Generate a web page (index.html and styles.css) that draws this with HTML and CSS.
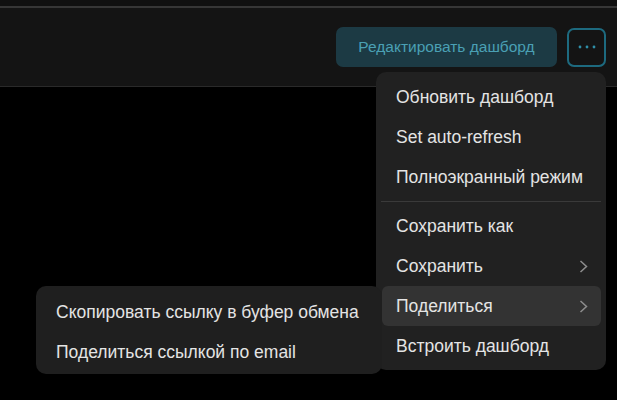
FILE: index.html
```html
<!DOCTYPE html>
<html lang="ru">
<head>
<meta charset="utf-8">
<link rel="stylesheet" href="styles.css">
</head>
<body>
<div class="topstrip"></div>
<header class="header">
  <button class="edit-btn">Редактировать дашборд</button>
  <button class="more-btn" aria-label="Ещё">
    <svg width="20" height="4" viewBox="0 0 20 4"><circle cx="3" cy="2" r="1.4"/><circle cx="10" cy="2" r="1.4"/><circle cx="17" cy="2" r="1.4"/></svg>
  </button>
</header>
<div class="canvas"></div>

<div class="menu main-menu">
  <div class="item">Обновить дашборд</div>
  <div class="item">Set auto-refresh</div>
  <div class="item">Полноэкранный режим</div>
  <div class="sep"></div>
  <div class="item">Сохранить как</div>
  <div class="item">Сохранить <svg class="chev" width="9" height="13" viewBox="0 0 9 13"><path d="M1.5 1 L7.5 6.5 L1.5 12"/></svg></div>
  <div class="item active">Поделиться <svg class="chev" width="9" height="13" viewBox="0 0 9 13"><path d="M1.5 1 L7.5 6.5 L1.5 12"/></svg></div>
  <div class="item">Встроить дашборд</div>
</div>

<div class="menu sub-menu">
  <div class="item">Скопировать ссылку в буфер обмена</div>
  <div class="item">Поделиться ссылкой по email</div>
</div>
</body>
</html>
```
FILE: styles.css
```css
html, body {
  margin: 0;
  padding: 0;
  background: #000;
  font-family: "Liberation Sans", Arial, sans-serif;
  width: 617px;
  height: 400px;
  overflow: hidden;
  position: relative;
}
.topstrip {
  height: 6px;
  background: #101010;
  border-bottom: 2px solid #363636;
}
.header {
  height: 78px;
  background: #141414;
  border-bottom: 1px solid #2a2a2a;
  display: flex;
  justify-content: flex-end;
  align-items: center;
  gap: 10px;
  padding-right: 11px;
  box-sizing: content-box;
}
.edit-btn {
  height: 40px;
  width: 221px;
  border: none;
  border-radius: 7px;
  background: #1c3a44;
  color: #4aa0b4;
  font-family: "Liberation Sans", Arial, sans-serif;
  font-size: 15.5px;
  padding: 0;
}
.more-btn {
  width: 39px;
  height: 39px;
  box-sizing: border-box;
  border: 2px solid #1d6a7f;
  border-radius: 7px;
  background: #141414;
  display: flex;
  align-items: center;
  justify-content: center;
  padding: 0;
}
.more-btn svg { fill: #2f8fa8; }
.menu {
  position: absolute;
  background: #212121;
  border-radius: 10px;
  box-sizing: border-box;
  padding: 5px 5px 4px 6px;
}
.main-menu {
  left: 376px;
  top: 72px;
  width: 230px;
  height: 298px;
}
.sub-menu {
  left: 36px;
  top: 286px;
  width: 346px;
  height: 88px;
  padding: 6px 5px 2px;
  background: #1f1f1f;
}
.item {
  height: 40px;
  display: flex;
  align-items: center;
  justify-content: space-between;
  padding: 0 13px 0 14px;
  color: #e4e4e4;
  font-size: 17.5px;
  border-radius: 6px;
}
.sub-menu .item { padding-left: 15px; }
.item.active { background: #333333; }
.sep {
  height: 1px;
  background: #3a3a3a;
  margin: 4px 0 4px -1px;
}
.chev {
  fill: none;
  stroke: #8e8e8e;
  stroke-width: 1.5;
}
```
